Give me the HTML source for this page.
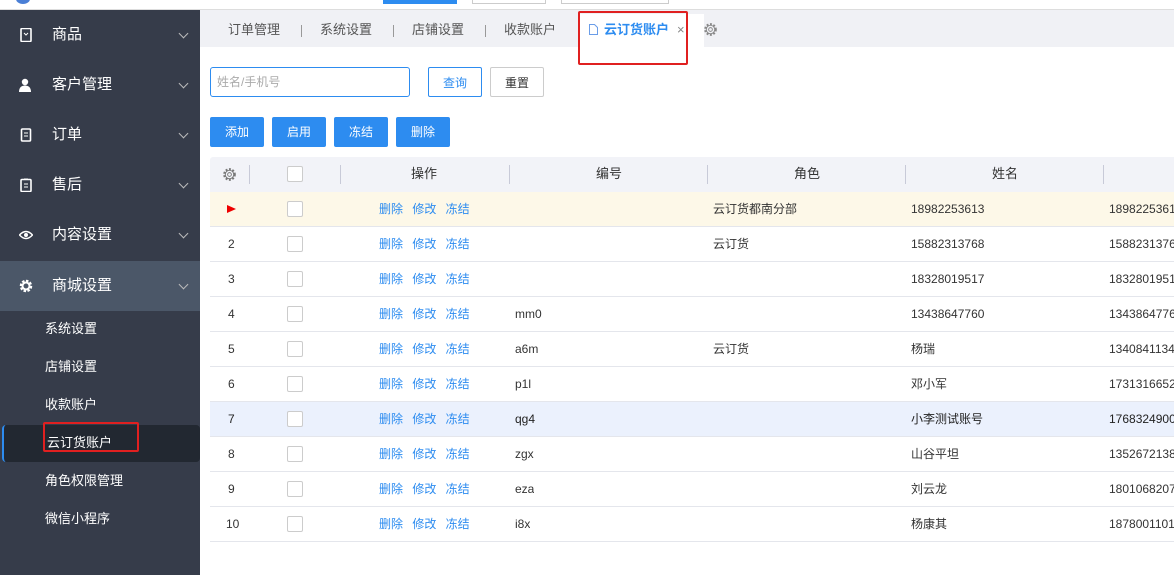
<!DOCTYPE html>
<html><head><meta charset="utf-8"><style>
*{margin:0;padding:0;box-sizing:border-box}
body{width:1174px;height:575px;overflow:hidden;background:#fff;font-family:"Liberation Sans","Noto Sans CJK SC",sans-serif;font-size:13px;color:#333;position:relative}
.a{position:absolute}
.side{left:0;top:10px;width:200px;height:565px;background:#363c4a}
.mi{position:absolute;left:0;width:200px;height:50px;color:#fff;font-size:15px;line-height:50px;padding-left:52px}
.mi .ic{position:absolute;left:19px;top:18px;width:14px;height:14px}
.mi .ch{position:absolute;right:13px;top:20px;width:7px;height:7px;border-right:1px solid #bbb;border-bottom:1px solid #bbb;transform:rotate(45deg)}
.si{position:absolute;left:45px;color:#fff;font-size:13px;line-height:20px}
.tabs{left:200px;top:10px;width:974px;height:37px;background:#f0f1f5}
.tab{position:absolute;top:0;line-height:40px;font-size:13px;color:#555}
.sep{position:absolute;top:15px;width:1px;height:12px;background:#999}
.btn{position:absolute;height:30px;line-height:30px;text-align:center;font-size:13px;border-radius:2px}
.bb{background:#2d8cf0;color:#fff}
.row{position:absolute;left:210px;width:964px;height:35px;border-bottom:1px solid #e4e6ec}
.c{position:absolute;top:0;line-height:34px;font-size:12px;white-space:nowrap;overflow:hidden}
.cb{position:absolute;left:77px;top:9px;width:16px;height:16px;border:1px solid #ccc;border-radius:2px;background:#fff}
.op{position:absolute;left:169px;top:0;line-height:34px;color:#2d8cf0;font-size:12px;word-spacing:6px}
</style></head><body>
<div class="a" style="left:0;top:0;width:1174px;height:10px;background:#fff;border-bottom:1px solid #ddd"></div>
<div class="a" style="left:16px;top:-6px;width:14px;height:10px;border-radius:50%;background:#4a7fd6"></div>
<div class="a" style="left:383px;top:0;width:74px;height:4px;background:#2d8cf0"></div>
<div class="a" style="left:472px;top:0;width:74px;height:4px;border:1px solid #ccc;border-top:none"></div>
<div class="a" style="left:561px;top:0;width:108px;height:4px;border:1px solid #ccc;border-top:none"></div>

<div class="a side">
<div class="mi" style="top:0">商品<svg class="ic" viewBox="0 0 14 14"><rect x="2" y="0.5" width="10" height="13" rx="1" fill="none" stroke="#fff" stroke-width="1.6"/><path d="M5 5l2 2 2-2" stroke="#fff" fill="none"/></svg><span class="ch"></span></div>
<div class="mi" style="top:50px">客户管理<svg class="ic" viewBox="0 0 14 14"><circle cx="6" cy="4" r="3.2" fill="#fff"/><path d="M0 14c0-5 3-6.5 6-6.5s6 1.5 6 6.5z" fill="#fff"/></svg><span class="ch"></span></div>
<div class="mi" style="top:100px">订单<svg class="ic" viewBox="0 0 14 14"><rect x="2.5" y="1" width="9" height="12" rx="1" fill="none" stroke="#fff" stroke-width="1.6"/><path d="M5 5h4M5 8h4" stroke="#fff"/></svg><span class="ch"></span></div>
<div class="mi" style="top:150px">售后<svg class="ic" viewBox="0 0 14 14"><rect x="2" y="1.5" width="10" height="12" rx="1" fill="none" stroke="#fff" stroke-width="1.6"/><path d="M5 6h4M5 9h4M5 1h4" stroke="#fff"/></svg><span class="ch"></span></div>
<div class="mi" style="top:200px">内容设置<svg class="ic" viewBox="0 0 14 14"><path d="M0.5 7Q7 0 13.5 7Q7 14 0.5 7z" fill="none" stroke="#fff" stroke-width="1.4"/><circle cx="7" cy="7" r="2" fill="#fff"/></svg><span class="ch"></span></div>
<div class="mi" style="top:251px;background:#4b5768">商城设置<svg class="ic" viewBox="0 0 14 14"><circle cx="7" cy="7" r="4.5" fill="none" stroke="#fff" stroke-width="3.5" stroke-dasharray="2.2 1.3"/><circle cx="7" cy="7" r="3.5" fill="none" stroke="#fff" stroke-width="2"/></svg><span class="ch"></span></div>
<div class="si" style="top:309px">系统设置</div>
<div class="si" style="top:347px">店铺设置</div>
<div class="si" style="top:385px">收款账户</div>
<div class="a" style="left:2px;top:415px;width:198px;height:37px;background:#222831;border-left:2px solid #2d8cf0;border-radius:4px"></div>
<div class="si" style="top:423px;left:47px">云订货账户</div>
<div class="a" style="left:43px;top:412px;width:96px;height:30px;border:2px solid #e02020;border-radius:2px"></div>
<div class="si" style="top:461px">角色权限管理</div>
<div class="si" style="top:499px">微信小程序</div>
</div>

<div class="a tabs">
<div class="tab" style="left:28px">订单管理</div><div class="sep" style="left:101px"></div>
<div class="tab" style="left:120px">系统设置</div><div class="sep" style="left:193px"></div>
<div class="tab" style="left:212px">店铺设置</div><div class="sep" style="left:285px"></div>
<div class="tab" style="left:304px">收款账户</div>
<div class="a" style="left:378px;top:4px;width:126px;height:33px;background:#fff"></div>
<svg class="a" style="left:389px;top:14px" width="9" height="11" viewBox="0 0 9 11"><path d="M0.5 0.5h5l3 3v7h-8z" fill="none" stroke="#6a9de8"/></svg>
<div class="tab" style="left:404px;color:#2d8cf0;font-weight:bold">云订货账户</div>
<div class="tab" style="left:477px;color:#888">×</div>
<svg class="a" style="left:503px;top:12px" width="15" height="15" viewBox="0 0 16 16"><circle cx="8" cy="8" r="5.5" fill="none" stroke="#888" stroke-width="2.5" stroke-dasharray="2 1.6"/><circle cx="8" cy="8" r="4.5" fill="#f0f1f5" stroke="#888"/><circle cx="8" cy="8" r="2" fill="none" stroke="#888"/></svg>
</div>
<div class="a" style="left:578px;top:11px;width:110px;height:54px;border:2px solid #e02020;border-radius:2px"></div>

<div class="a" style="left:210px;top:67px;width:200px;height:30px;border:1px solid #2d8cf0;border-radius:3px;color:#aaa;line-height:28px;padding-left:6px;font-size:12px">姓名/手机号</div>
<div class="btn" style="left:428px;top:67px;width:54px;border:1px solid #2d8cf0;color:#2d8cf0;font-size:12px">查询</div>
<div class="btn" style="left:490px;top:67px;width:54px;border:1px solid #ccc;color:#333;font-size:12px">重置</div>
<div class="btn bb" style="left:210px;top:117px;width:54px;font-size:12px">添加</div>
<div class="btn bb" style="left:272px;top:117px;width:54px;font-size:12px">启用</div>
<div class="btn bb" style="left:334px;top:117px;width:54px;font-size:12px">冻结</div>
<div class="btn bb" style="left:396px;top:117px;width:54px;font-size:12px">删除</div>

<div class="a" style="left:210px;top:157px;width:964px;height:35px;background:#f2f3f8;border-radius:3px 0 0 0">
<svg class="a" style="left:12px;top:10px" width="15" height="15" viewBox="0 0 16 16"><circle cx="8" cy="8" r="5.5" fill="none" stroke="#777" stroke-width="2.5" stroke-dasharray="2 1.6"/><circle cx="8" cy="8" r="4.5" fill="#f2f3f8" stroke="#777"/><circle cx="8" cy="8" r="2" fill="none" stroke="#777"/></svg>
<div class="a" style="left:39px;top:8px;width:1px;height:19px;background:#c8cad8"></div>
<div class="cb"></div>
<div class="a" style="left:130px;top:8px;width:1px;height:19px;background:#c8cad8"></div>
<div class="c" style="left:201px;font-size:13px">操作</div>
<div class="a" style="left:299px;top:8px;width:1px;height:19px;background:#c8cad8"></div>
<div class="c" style="left:386px;font-size:13px">编号</div>
<div class="a" style="left:497px;top:8px;width:1px;height:19px;background:#c8cad8"></div>
<div class="c" style="left:584px;font-size:13px">角色</div>
<div class="a" style="left:695px;top:8px;width:1px;height:19px;background:#c8cad8"></div>
<div class="c" style="left:782px;font-size:13px">姓名</div>
<div class="a" style="left:893px;top:8px;width:1px;height:19px;background:#c8cad8"></div>
</div>

<div class="row" style="top:192px;background:#fdf8e8"><svg class="a" style="left:17px;top:13px" width="9" height="8"><path d="M0 0L9 4L0 8z" fill="#e00"/></svg><div class="cb"></div><div class="op">删除 修改 冻结</div><div class="c" style="left:503px">云订货都南分部</div><div class="c" style="left:701px">18982253613</div><div class="c" style="left:899px;width:65px">18982253613</div></div>
<div class="row" style="top:227px"><div class="c" style="left:18px">2</div><div class="cb"></div><div class="op">删除 修改 冻结</div><div class="c" style="left:503px">云订货</div><div class="c" style="left:701px">15882313768</div><div class="c" style="left:899px;width:65px">15882313768</div></div>
<div class="row" style="top:262px"><div class="c" style="left:18px">3</div><div class="cb"></div><div class="op">删除 修改 冻结</div><div class="c" style="left:701px">18328019517</div><div class="c" style="left:899px;width:65px">18328019517</div></div>
<div class="row" style="top:297px"><div class="c" style="left:18px">4</div><div class="cb"></div><div class="op">删除 修改 冻结</div><div class="c" style="left:305px">mm0</div><div class="c" style="left:701px">13438647760</div><div class="c" style="left:899px;width:65px">13438647760</div></div>
<div class="row" style="top:332px"><div class="c" style="left:18px">5</div><div class="cb"></div><div class="op">删除 修改 冻结</div><div class="c" style="left:305px">a6m</div><div class="c" style="left:503px">云订货</div><div class="c" style="left:701px">杨瑞</div><div class="c" style="left:899px;width:65px">13408411340</div></div>
<div class="row" style="top:367px"><div class="c" style="left:18px">6</div><div class="cb"></div><div class="op">删除 修改 冻结</div><div class="c" style="left:305px">p1l</div><div class="c" style="left:701px">邓小军</div><div class="c" style="left:899px;width:65px">17313166520</div></div>
<div class="row" style="top:402px;background:#ebf1fd"><div class="c" style="left:18px;color:#222">7</div><div class="cb"></div><div class="op">删除 修改 冻结</div><div class="c" style="left:305px;color:#222">qg4</div><div class="c" style="left:701px;color:#222">小李测试账号</div><div class="c" style="left:899px;width:65px;color:#222">17683249000</div></div>
<div class="row" style="top:437px"><div class="c" style="left:18px">8</div><div class="cb"></div><div class="op">删除 修改 冻结</div><div class="c" style="left:305px">zgx</div><div class="c" style="left:701px">山谷平坦</div><div class="c" style="left:899px;width:65px">13526721380</div></div>
<div class="row" style="top:472px"><div class="c" style="left:18px">9</div><div class="cb"></div><div class="op">删除 修改 冻结</div><div class="c" style="left:305px">eza</div><div class="c" style="left:701px">刘云龙</div><div class="c" style="left:899px;width:65px">18010682070</div></div>
<div class="row" style="top:507px"><div class="c" style="left:16px">10</div><div class="cb"></div><div class="op">删除 修改 冻结</div><div class="c" style="left:305px">i8x</div><div class="c" style="left:701px">杨康其</div><div class="c" style="left:899px;width:65px">18780011010</div></div>
</body></html>
